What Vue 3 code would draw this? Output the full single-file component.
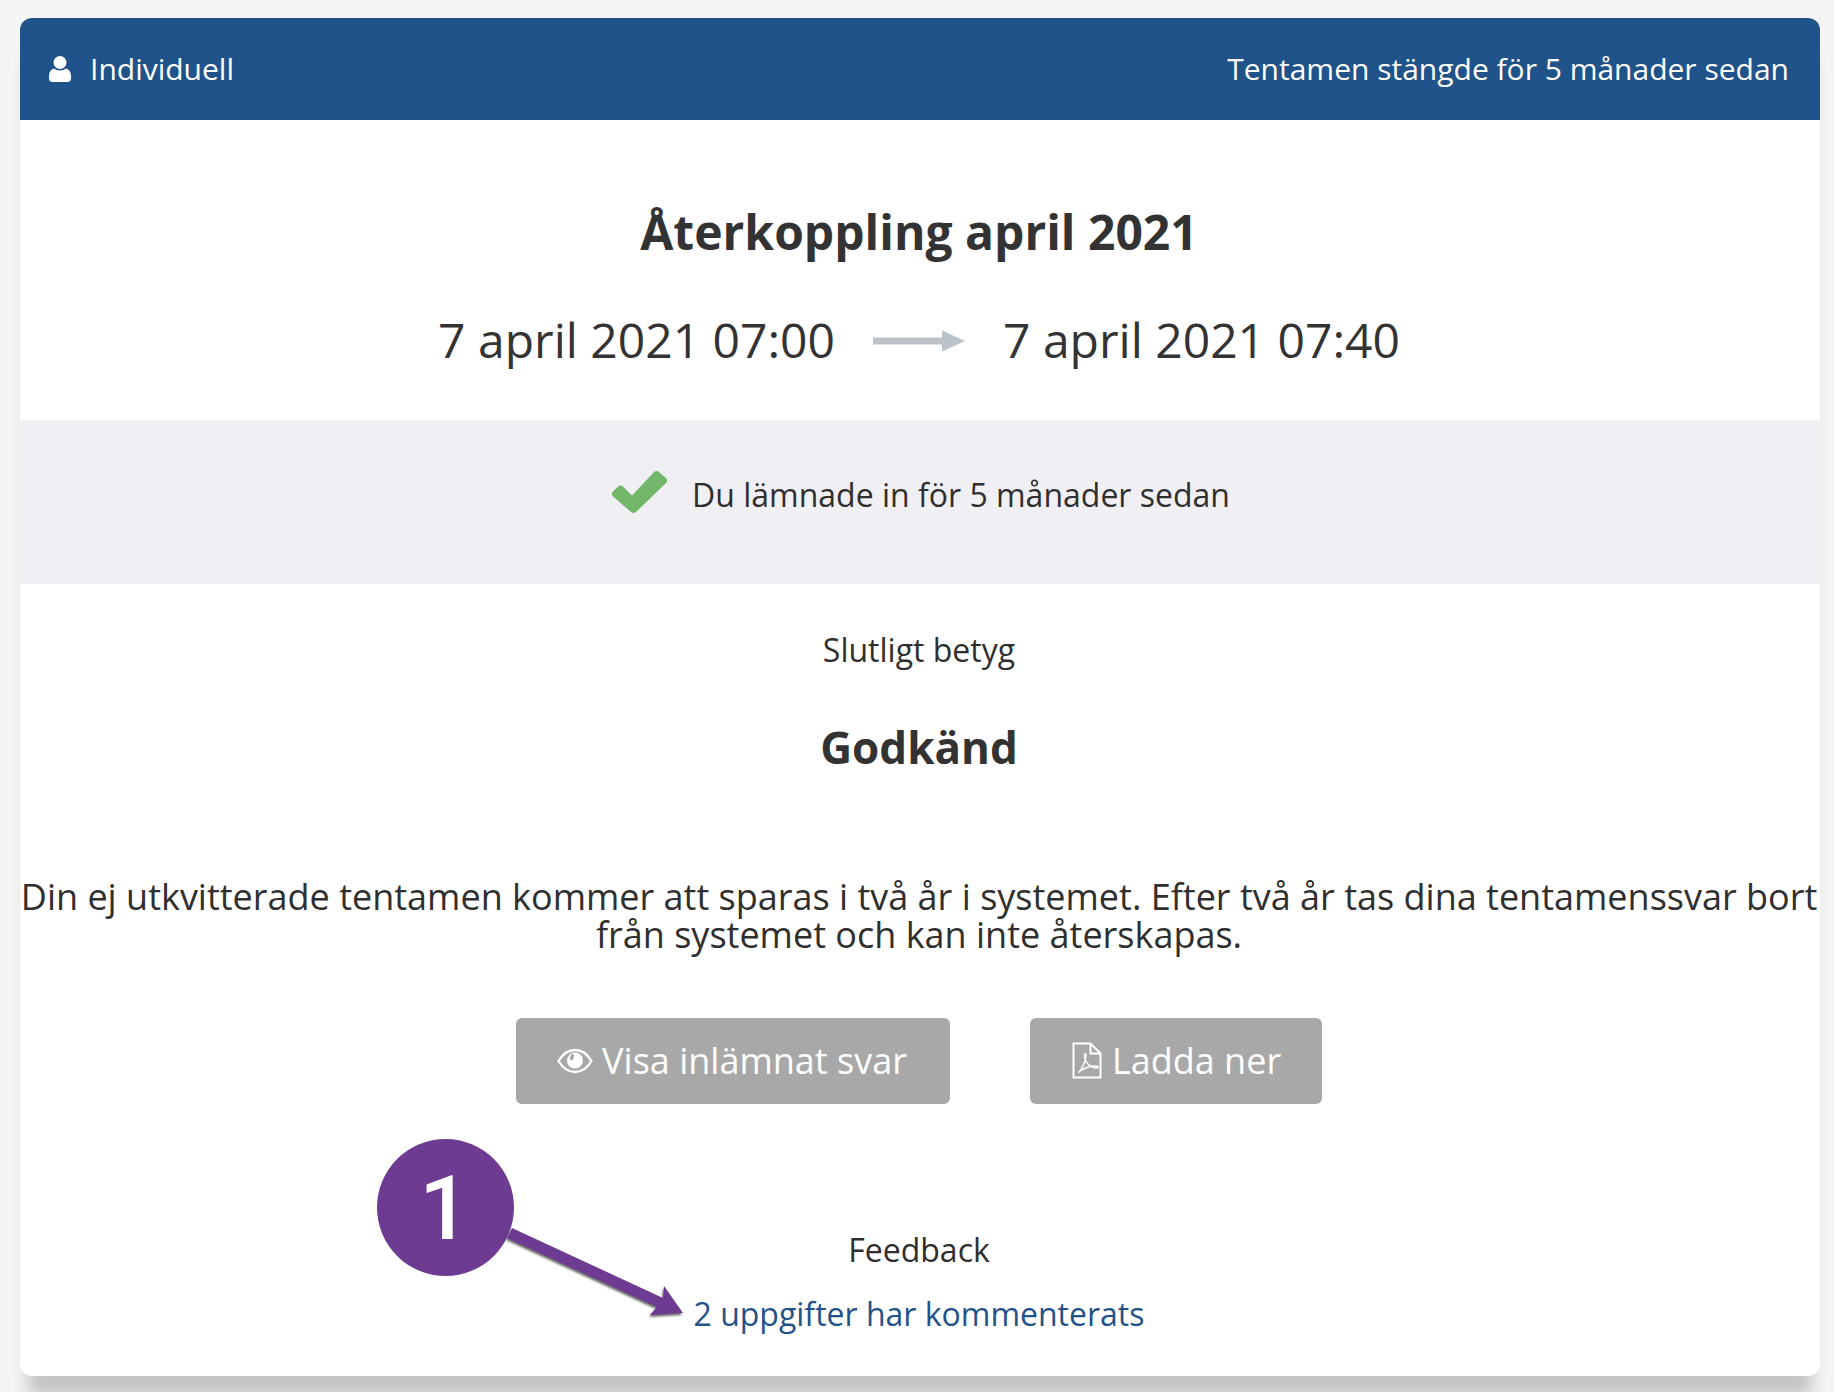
<template>
  <div class="page">
    <main class="card">
      <header class="bar">
        <div class="bar-left">
          <svg class="user" viewBox="0 0 22 26" width="22" height="26"><circle cx="11" cy="6.5" r="6.5" fill="#fff"/><path d="M5 12.5c3 2.6 9 2.6 12 0 3 .8 5 3.4 5 7.5v2.500c0 2-1.400 3.500-3.400 3.500H3.400C1.400 26 0 24.500 0 22.500V20c0-4.100 2-6.700 5-7.500z" fill="#fff"/></svg>
          <span>Individuell</span>
        </div>
        <span>Tentamen stängde för 5 månader sedan</span>
      </header>

      <section class="intro">
        <h1>Återkoppling april 2021</h1>
        <div class="dates">
          <span>7 april 2021 07:00</span>
          <svg viewBox="0 0 94 24" width="94" height="24"><path d="M1 8.500h69V1.500l23 10.500-23 10.500v-7H1z" fill="#bcc3c8"/></svg>
          <span>7 april 2021 07:40</span>
        </div>
      </section>

      <section class="status">
        <svg viewBox="0 0 58 44" width="58" height="44"><path d="M3 21.500l5-5c1.500-1.500 3.500-1.500 5 0l9 9L44 2c1.500-1.500 3.500-1.500 5 0l7 6c1.500 1.500 1.500 3.500 0 5L26 42c-1.500 1.500-3.500 1.500-5 0L3 26.500c-1.500-1.500-1.500-3.500 0-5z" fill="#72b66a"/></svg>
        <span>Du lämnade in för 5 månader sedan</span>
      </section>

      <section class="result">
        <div class="label">Slutligt betyg</div>
        <div class="grade">Godkänd</div>
        <p>Din ej utkvitterade tentamen kommer att sparas i två år i systemet. Efter två år tas dina tentamenssvar bort från systemet och kan inte återskapas.</p>
        <div class="actions">
          <button class="btn view" type="button">
            <svg viewBox="0 0 36 26" width="36" height="26"><path d="M1.500 13C6 5.500 11.500 2 18 2s12 3.500 16.500 11C30 20.500 24.500 24 18 24S6 20.500 1.500 13z" fill="none" stroke="#fff" stroke-width="2.400"/><circle cx="18" cy="12.500" r="8" fill="#fff"/><ellipse cx="15" cy="9" rx="1.800" ry="3.200" fill="#a8a8a8" transform="rotate(15 15 9)"/></svg>
            <span>Visa inlämnat svar</span>
          </button>
          <button class="btn dl" type="button">
            <svg viewBox="0 0 30 37" width="30" height="37" fill="none" stroke="#fff"><path d="M1.500 1.500h17l10 10v24h-27z" stroke-width="2"/><path d="M18.500 1.500v10h10" stroke-width="2"/><path d="M6 31c3-2 7-10 8-17 .500-3-1.500-3-1.500 0 0 6 6 12 12 12 3 0 2-2-1-2-5 0-11 2-15 5" stroke-width="1.400"/></svg>
            <span>Ladda ner</span>
          </button>
        </div>
        <div class="label feedback">Feedback</div>
        <a class="link" href="#">2 uppgifter har kommenterats</a>
      </section>

      <svg class="callout" viewBox="0 0 200 100" width="200" height="100" aria-hidden="true">
        <defs>
          <filter id="sh" x="-10%" y="-10%" width="120%" height="130%">
            <feDropShadow dx="-1" dy="2" stdDeviation="1.200" flood-color="#333" flood-opacity=".75"/>
          </filter>
        </defs>
        <path filter="url(#sh)" d="M12 8L163 78l1-12 19 27-33 2 7-8L7 18z" fill="#6d3b91"/>
      </svg>
      <div class="badge">1</div>
    </main>
  </div>
</template>

<script setup>
</script>

<style>
html, body { margin: 0; background: #f5f5f5; }
</style>

<style scoped>
.page {
  height: 1392px;
  overflow: hidden;
  padding: 18px 14px 0 20px;
  box-sizing: border-box;
  font-family: "Open Sans", "Noto Sans", sans-serif;
  color: #2f2f2f;
}
.card {
  position: relative;
  height: 1358px;
  background: #fff;
  border-radius: 12px;
  box-shadow: 0 28px 16px -8px #c4c4c4;
}
.bar {
  height: 102px;
  box-sizing: border-box;
  padding: 0 31px 2px 29px;
  background: #1f5389;
  border-radius: 12px 12px 0 0;
  color: #fff;
  font-size: 30px;
  display: flex;
  align-items: center;
  justify-content: space-between;
}
.bar-left { display: flex; align-items: center; gap: 19px; }
.user { margin-top: 2px; }
.intro { text-align: center; height: 300px; box-sizing: border-box; padding: 79px 2px 0 0; }
h1 { margin: 0; font-size: 48px; line-height: 66px; font-weight: 700; color: #333; }
.dates {
  margin-top: 42px;
  display: flex;
  justify-content: center;
  align-items: center;
  gap: 37px;
  font-size: 48px;
  line-height: 66px;
  color: #333;
}
.dates svg { margin-top: 2px; }
.status {
  height: 164px;
  box-sizing: border-box;
  padding-bottom: 16px;
  background: #f0f0f4;
  display: flex;
  justify-content: center;
  align-items: center;
  gap: 24px;
  font-size: 32px;
}
.status svg { margin-top: -4px; }
.result { text-align: center; padding: 45px 2px 0 0; }
.label { font-size: 32px; line-height: 42px; }
.grade { margin-top: 47px; font-size: 44px; line-height: 58px; font-weight: 700; color: #333; }
p { margin: 102px 0 0; font-size: 36px; line-height: 38px; }
.actions { margin-top: 64px; display: flex; justify-content: center; gap: 80px; }
.btn {
  height: 86px;
  box-sizing: border-box;
  border: 0;
  border-radius: 6px;
  background: #a8a8a8;
  color: #fff;
  font: inherit;
  font-size: 36px;
  display: flex;
  align-items: center;
  justify-content: center;
  gap: 9px;
  padding: 0 0 2px;
}
.btn svg { margin-top: 1px; }
.view { width: 434px; padding-right: 2px; }
.dl { width: 292px; padding-left: 1px; gap: 10px; }
.feedback { margin-top: 125px; }
.link {
  display: block;
  margin-top: 20px;
  font-size: 32px;
  line-height: 46px;
  color: #1f5389;
  text-decoration: none;
}
.callout { position: absolute; left: 480px; top: 1202px; }
.badge {
  position: absolute;
  left: 357px;
  top: 1121px;
  width: 137px;
  height: 137px;
  padding-right: 2px;
  box-sizing: border-box;
  border-radius: 50%;
  background: #6d3b91;
  color: #fff;
  font-family: Roboto, "Liberation Sans", sans-serif;
  font-weight: 500;
  font-size: 89px;
  line-height: 139px;
  text-align: center;
}
</style>
